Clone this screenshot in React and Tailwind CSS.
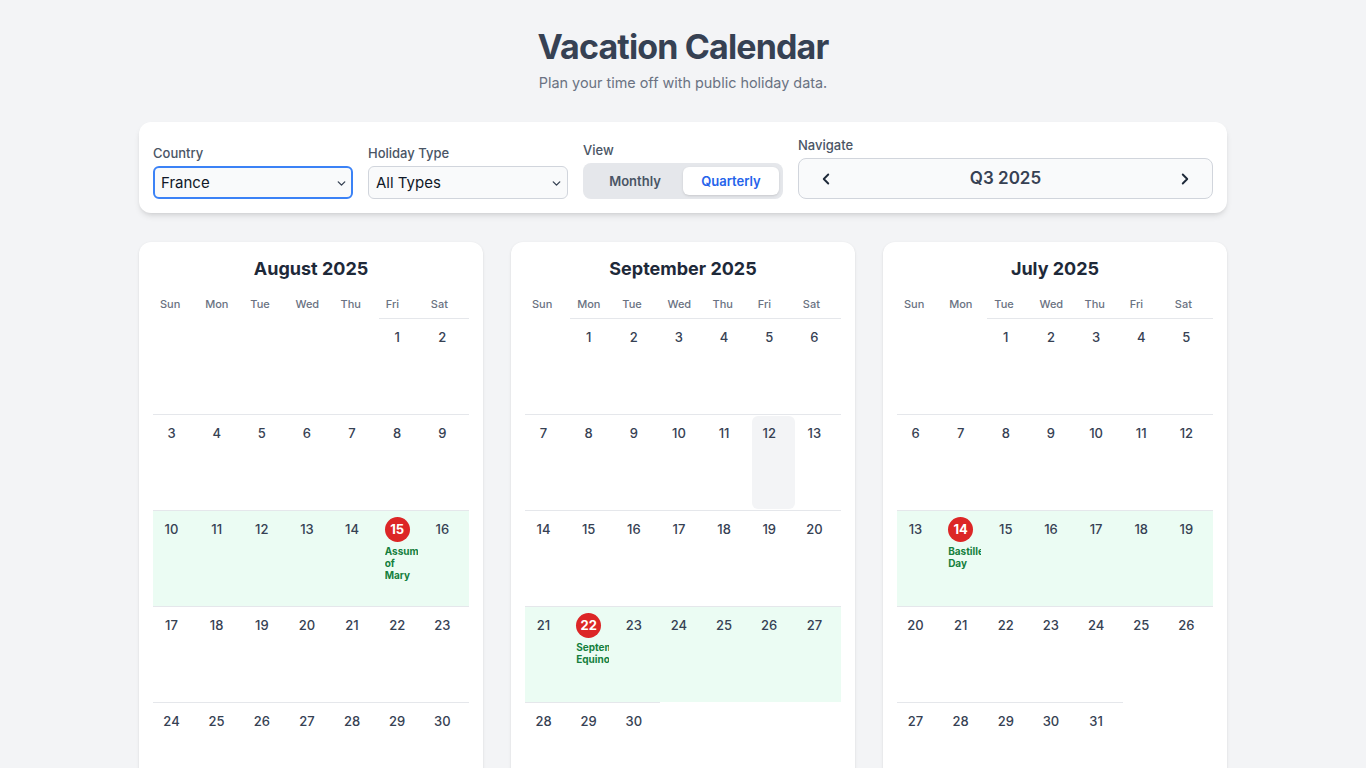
import React from "react";
import { ChevronDown, ChevronLeft, ChevronRight } from "lucide-react";

const DAYS = ["Sun", "Mon", "Tue", "Wed", "Thu", "Fri", "Sat"];

const MONTHS = [
  { name: "August 2025", start: 5, days: 31, holidays: { 15: "Assumption of Mary" }, today: null },
  { name: "September 2025", start: 1, days: 30, holidays: { 22: "September Equinox" }, today: 12 },
  { name: "July 2025", start: 2, days: 31, holidays: { 14: "Bastille Day" }, today: null },
];

function MonthCard({ m }) {
  const cells = [];
  for (let i = 0; i < m.start; i++) cells.push(null);
  for (let d = 1; d <= m.days; d++) cells.push(d);
  while (cells.length % 7 !== 0) cells.push(null);
  const rows = [];
  for (let i = 0; i < cells.length; i += 7) rows.push(cells.slice(i, i + 7));

  return (
    <div className="bg-white rounded-xl shadow-sm px-3.5 pt-[13px] pb-4">
      <h2 className="text-lg leading-7 font-bold text-gray-800 text-center">{m.name}</h2>
      <div className="grid grid-cols-7 mt-[13px]">
        {DAYS.map((d) => (
          <div key={d} className="pl-[7px] pb-1.5 text-[11px] leading-4 font-medium text-gray-500">
            {d}
          </div>
        ))}
      </div>
      <div className="grid grid-cols-7">
        {rows.map((row, ri) => {
          const hasHoliday = row.some((d) => d && m.holidays[d]);
          return row.map((d, ci) => {
            if (!d) {
              return <div key={ri + "-" + ci} className={"h-24 " + (hasHoliday ? "bg-[#ebfcf3]" : "")} />;
            }
            const holiday = m.holidays[d];
            const isToday = m.today === d;
            return (
              <div
                key={ri + "-" + ci}
                className={"h-24 border-t border-gray-200 p-px overflow-hidden " + (hasHoliday ? "bg-[#ebfcf3]" : "")}
              >
                <div className={"h-full rounded-md px-[5px] pt-[5px] overflow-hidden " + (isToday ? "bg-gray-100" : "")}>
                  <div
                    className={
                      "w-[25px] h-[25px] flex items-center justify-center rounded-full text-[13px] " +
                      (holiday ? "bg-[#dc2626] text-white font-bold" : "text-gray-700 font-medium")
                    }
                  >
                    {d}
                  </div>
                  {holiday && (
                    <div className="mt-[3px] text-[10px] leading-3 font-bold text-[#15803d] overflow-hidden">
                      {holiday}
                    </div>
                  )}
                </div>
              </div>
            );
          });
        })}
      </div>
    </div>
  );
}

export default function App() {
  return (
    <div
      className="min-h-screen bg-gray-100 pt-[27px] pb-10"
      style={{ fontFamily: "Inter, 'Noto Sans', sans-serif" }}
    >
      <div className="max-w-6xl mx-auto px-8">
        <div className="text-center">
          <h1 className="text-[34px] leading-10 font-bold text-gray-700 tracking-tight">Vacation Calendar</h1>
          <p className="mt-[5px] text-[14.4px] leading-[22px] text-gray-500">Plan your time off with public holiday data.</p>
        </div>

        <div className="mt-[28px] bg-white rounded-xl shadow-md p-3.5">
          <div className="flex items-end gap-[15px]">
            <div className="w-[200px]">
              <div className="text-[13px] leading-[18px] font-medium text-gray-600 mb-1">Country</div>
              <div className="h-[33px] rounded-md border-2 border-[#3b82f6] bg-gray-50 flex items-center justify-between pl-1.5 pr-[3px] pt-px">
                <span className="text-[15px] text-gray-900">France</span>
                <ChevronDown size={13} strokeWidth={2.5} className="text-gray-700" />
              </div>
            </div>
            <div className="w-[200px]">
              <div className="text-[13px] leading-[18px] font-medium text-gray-600 mb-1">Holiday Type</div>
              <div className="h-[33px] rounded-md border border-gray-300 bg-gray-50 flex items-center justify-between pl-[7px] pr-1 pt-px">
                <span className="text-[15px] text-gray-900">All Types</span>
                <ChevronDown size={13} strokeWidth={2.5} className="text-gray-700" />
              </div>
            </div>
            <div className="w-[200px]">
              <div className="text-[13px] leading-[18px] font-medium text-gray-600 mb-1">View</div>
              <div className="h-9 rounded-lg bg-gray-200 p-1 flex">
                <div className="flex-1 flex items-center justify-center pt-px text-[13px] font-semibold text-gray-600">Monthly</div>
                <div className="flex-1 flex items-center justify-center pt-px text-[13px] font-semibold text-[#2563eb] bg-white rounded-md shadow-sm">
                  Quarterly
                </div>
              </div>
            </div>
            <div className="flex-1">
              <div className="text-[13px] leading-[18px] font-medium text-gray-600 mb-1">Navigate</div>
              <div className="h-[41px] rounded-lg border border-gray-300 bg-gray-50 flex items-center justify-between px-[18px] pt-px">
                <ChevronLeft size={18} strokeWidth={2.5} className="text-gray-800" />
                <span className="text-[17px] font-semibold text-gray-700">Q3 2025</span>
                <ChevronRight size={18} strokeWidth={2.5} className="text-gray-800" />
              </div>
            </div>
          </div>
        </div>

        <div className="mt-[29px] grid grid-cols-3 gap-7">
          {MONTHS.map((m) => (
            <MonthCard key={m.name} m={m} />
          ))}
        </div>
      </div>
    </div>
  );
}
